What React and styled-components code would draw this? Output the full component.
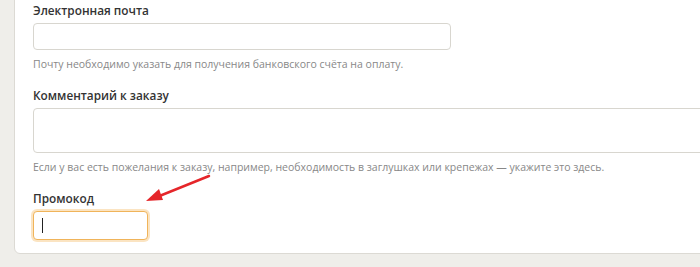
import React from "react";
import styled, { createGlobalStyle } from "styled-components";

const GlobalStyle = createGlobalStyle`
  html, body {
    margin: 0;
    padding: 0;
    background: #efeeea;
    overflow: hidden;
  }
  body {
    font-family: "Open Sans", "Noto Sans", sans-serif;
  }
`;

const Page = styled.div`
  position: relative;
  display: flow-root;
  width: 700px;
  height: 267px;
  padding-left: 14px;
  box-sizing: border-box;
`;

const Card = styled.div`
  width: 720px;
  margin-top: -16px;
  padding: 16px 0 13px 18px;
  background: #fff;
  border: 1px solid #dcdad4;
  border-radius: 6px;
  box-sizing: border-box;
  display: flex;
  flex-direction: column;
  gap: 14px;
`;

const Field = styled.div`
  display: flex;
  flex-direction: column;
  align-items: flex-start;
`;

const Label = styled.div`
  font-size: 11.8px;
  font-weight: 600;
  line-height: 18px;
  color: #333;
  margin-bottom: 4px;
`;

const Input = styled.div`
  box-sizing: border-box;
  width: ${({ $width }) => $width};
  height: ${({ $height }) => $height || "27px"};
  border: 1px solid ${({ $focus }) => ($focus ? "#f0b45a" : "#d8d6cf")};
  border-radius: 4px;
  background: #fff;
  box-shadow: ${({ $focus }) =>
    $focus ? "0 0 0 2px rgba(246, 196, 120, 0.45)" : "none"};
  display: flex;
  align-items: center;
  padding-left: 8px;
`;

const Caret = styled.span`
  width: 1px;
  height: 15px;
  background: #222;
`;

const Help = styled.div`
  font-size: 10.5px;
  line-height: 16px;
  color: #888;
  margin-top: 6px;
`;

const Arrow = styled.svg`
  position: absolute;
  left: 140px;
  top: 168px;
  width: 80px;
  height: 40px;
  overflow: visible;
`;

export default function App() {
  return (
    <Page>
      <GlobalStyle />
      <Card>
        <Field>
          <Label>Электронная почта</Label>
          <Input $width="418px" />
          <Help>Почту необходимо указать для получения банковского счёта на оплату.</Help>
        </Field>
        <Field>
          <Label>Комментарий к заказу</Label>
          <Input $width="700px" $height="45px" />
          <Help>
            Если у вас есть пожелания к заказу, например, необходимость в заглушках или крепежах — укажите это здесь.
          </Help>
        </Field>
        <Field>
          <Label>Промокод</Label>
          <Input $width="115px" $height="29px" $focus>
            <Caret />
          </Input>
        </Field>
      </Card>
      <Arrow viewBox="0 0 80 40">
        <line x1="69" y1="8" x2="17" y2="29" stroke="#e5262a" strokeWidth="2.5" strokeLinecap="round" />
        <polygon points="6,33 19,21 23,32" fill="#e5262a" />
      </Arrow>
    </Page>
  );
}
